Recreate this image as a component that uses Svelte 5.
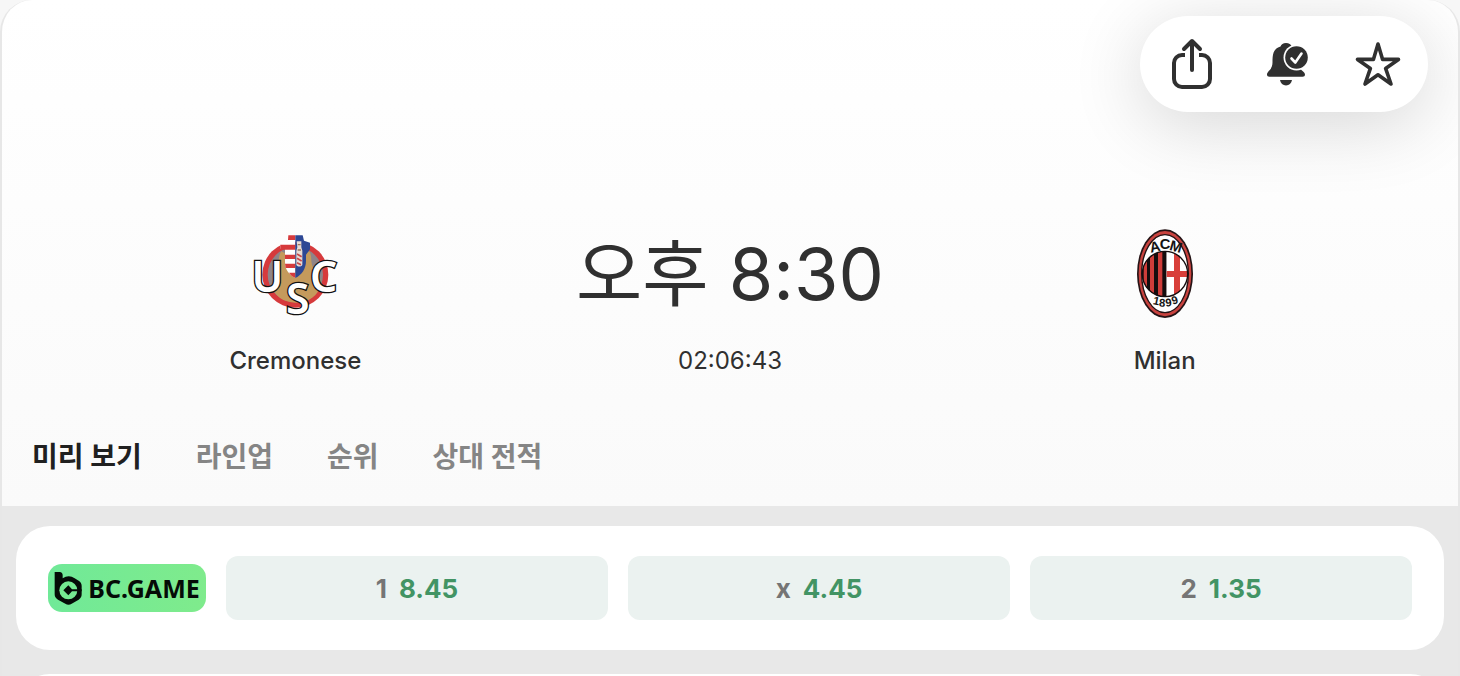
<script lang="ts">
	let activeTab = $state('preview');
	let favourite = $state(false);

	const tabs = [
		{ id: 'preview', label: '미리 보기' },
		{ id: 'lineup', label: '라인업' },
		{ id: 'standings', label: '순위' },
		{ id: 'h2h', label: '상대 전적' }
	];

	const odds = [
		{ pick: '1', value: '8.45' },
		{ pick: 'x', value: '4.45' },
		{ pick: '2', value: '1.35' }
	];
</script>

<main class="match">
	<header class="match-header">
		<div class="actions">
			<button type="button" class="action" aria-label="공유">
				<svg width="48" height="56" viewBox="0 0 48 56" fill="none" stroke="currentColor" stroke-width="4" stroke-linecap="round" stroke-linejoin="round">
					<path d="M17 19h-3a8 8 0 0 0-8 8v16a8 8 0 0 0 8 8h20a8 8 0 0 0 8-8V27a8 8 0 0 0-8-8h-3" stroke-linecap="butt" />
					<path d="M24 34V6M16 13l8-8 8 8" />
				</svg>
			</button>
			<button type="button" class="action" aria-label="알림">
				<svg width="48" height="56" viewBox="0 0 48 56" fill="currentColor">
					<path d="M25 7c3 0 5 1.400 5.800 3.400A13 13 0 0 0 39.500 33c1.800 2 4.500 3.500 4.500 5.600 0 1.400-1 2.200-2.400 2.200H8.400C7 40.800 6 40 6 38.600c0-4 5.500-4.500 5.500-12 0-8 .6-14.200 8-16.200C20.400 8.400 22 7 25 7Z" />
					<path d="M19 44h12c-.6 3.400-2.800 5.400-6 5.400s-5.400-2-6-5.400Z" />
					<circle cx="35.500" cy="21.500" r="13" fill="#fff" />
					<circle cx="35.500" cy="21.500" r="11.300" />
					<path d="m30.500 22.500 3.800 4 6.200-9" fill="none" stroke="#fff" stroke-width="2.600" stroke-linecap="round" stroke-linejoin="round" />
				</svg>
			</button>
			<button type="button" class="action" aria-label="즐겨찾기" aria-pressed={favourite} onclick={() => (favourite = !favourite)}>
				<svg width="48" height="56" viewBox="0 0 48 56" fill={favourite ? 'currentColor' : 'none'} stroke="currentColor" stroke-width="3.600" stroke-linejoin="round">
					<path d="m24 8 4.600 15.400H44.500L31.600 32.400 37 48 24 38.800 11 48l5.400-15.600L3.500 23.400h15.900L24 8Z" />
				</svg>
			</button>
		</div>

		<div class="scoreboard">
			<div class="team">
				<svg class="crest" width="88" height="90" viewBox="34 15 264 270" role="img" aria-label="Cremonese">
					<circle cx="167" cy="152" r="99" fill="#d63a3c" />
					<circle cx="167" cy="152" r="83" fill="#8f8488" />
					<path d="M125 82c18 14 66 14 84 0 8 12 4 26 8 40 6 26 30 34 28 58-10 36-38 56-76 56-40 0-62-20-76-52 14-16 24-34 24-60 0-18 0-30 8-42Z" fill="#c49a5c" />
					<path d="M146 34h21v128c-18-10-31-24-31-48V74h-14V55h22Z" fill="#fff" />
					<path d="M146 34h21v14h-22ZM122 62h45v15h-45ZM136 92h31v13h-31ZM136 119h31v13h-29ZM148 146h19v16c-8-4-14-8-19-16Z" fill="#d63a3c" />
					<path d="M167 34h22l4 16 18 6v20l-12 16v18c0 24-12 42-32 52Z" fill="#2d4794" />
					<path d="M171 52h14v18l3 10v43c-5 6-13 6-18 0V80l3-10Z" fill="#e9dcd3" />
					<path d="m172 90 14 8M172 103l14 8M172 116l12 6" stroke="#c8474a" stroke-width="5" />
					<path d="M174 62h9M174 78h10" stroke="#9b7462" stroke-width="4" />
					<g class="crest-letters" font-size="128" text-anchor="middle">
						<text x="83" y="204">U</text>
						<text x="174" y="270">S</text>
						<text x="252" y="204">C</text>
					</g>
				</svg>
				<span class="team-name">Cremonese</span>
			</div>

			<div class="kickoff">
				<time class="kickoff-time" datetime="20:30">오후 8:30</time>
				<span class="countdown">02:06:43</span>
			</div>

			<div class="team">
				<svg class="crest" width="56" height="90" viewBox="49 27 168 270" role="img" aria-label="Milan">
					<defs>
						<clipPath id="milan-field"><ellipse cx="133" cy="162" rx="68" ry="68" /></clipPath>
					</defs>
					<ellipse cx="133" cy="161" rx="84" ry="133" fill="#241315" />
					<ellipse cx="133" cy="161" rx="79" ry="128" fill="#c9433f" />
					<ellipse cx="133" cy="161" rx="70" ry="117" fill="#fff" stroke="#241315" stroke-width="4" />
					<g clip-path="url(#milan-field)">
						<path d="M60 90h78v145H60Z" fill="#150d0e" />
						<path d="M69 90h10v145H69ZM88 90h12v145H88ZM112 90h13v145h-13Z" fill="#cf3d3a" />
						<path d="M138 90h70v145h-70Z" fill="#fff" />
						<path d="M160 90h18v145h-18ZM138 153h70v18h-70Z" fill="#d83f3a" />
					</g>
					<ellipse cx="133" cy="162" rx="68" ry="68" fill="none" stroke="#150d0e" stroke-width="4" />
					<g class="milan-letters" font-size="44" text-anchor="middle">
						<text x="106" y="95" transform="rotate(-12 106 95)">A</text>
						<text x="133" y="87">C</text>
						<text x="162" y="94" transform="rotate(16 162 94)">M</text>
					</g>
					<g class="milan-letters" font-size="34" text-anchor="middle">
						<text x="105" y="254" transform="rotate(12 105 254)">1</text>
						<text x="124" y="260" transform="rotate(4 124 260)">8</text>
						<text x="145" y="259" transform="rotate(-6 145 259)">9</text>
						<text x="165" y="252" transform="rotate(-16 165 252)">9</text>
					</g>
				</svg>
				<span class="team-name">Milan</span>
			</div>
		</div>

		<nav class="tabs">
			{#each tabs as tab (tab.id)}
				<button type="button" class="tab" class:active={activeTab === tab.id} onclick={() => (activeTab = tab.id)}>
					{tab.label}
				</button>
			{/each}
		</nav>
	</header>

	<div class="content">
		<section class="odds-card">
			<a class="bookmaker" href="#bcgame">
				<svg width="28" height="34" viewBox="0 0 84 102" aria-hidden="true">
					<path d="M2 3h15c6 0 9 4 9 10v9c6-4 12-6 18-6 7 0 12 2 18 6l12 7c6 4 9 9 9 16v25c0 7-3 12-9 16L53 98c-6 4-13 4-19 0L12 86C5 82 2 77 2 70V3Z" fill="#050b07" />
					<circle cx="43" cy="58" r="27" fill="#75e991" />
					<path d="m43 43 11 12h29v6H54L43 73 28 58Z" fill="#050b07" />
				</svg>
				<span>BC.GAME</span>
			</a>
			{#each odds as odd (odd.pick)}
				<button type="button" class="odd">
					<span class="odd-pick">{odd.pick}</span>
					<span class="odd-value">{odd.value}</span>
				</button>
			{/each}
		</section>
		<section class="next-card"></section>
	</div>
</main>

<style>
	:global(body) {
		background: #f7f7f7;
	}

	.match {
		box-sizing: border-box;
		height: 100vh;
		overflow: hidden;
		border: 2px solid #e7e7e7;
		border-width: 0 2px;
		border-radius: 32px 32px 0 0;
		background: #e8e8e8;
		color: #303030;
		font-family: Inter, 'Noto Sans CJK KR', sans-serif;
	}

	button {
		border: 0;
		padding: 0;
		background: none;
		color: inherit;
		font: inherit;
		cursor: pointer;
	}

	.match-header {
		display: flex;
		flex-direction: column;
		padding-top: 16px;
		background: linear-gradient(#fff, #fafafa);
	}

	.actions {
		display: flex;
		align-self: flex-end;
		align-items: center;
		gap: 45px;
		height: 96px;
		margin-right: 30px;
		padding: 0 26px 0 28px;
		border-radius: 48px;
		background: #fff;
		box-shadow: 0 12px 72px rgb(0 0 0 / 16%);
	}

	.action {
		display: flex;
	}

	.scoreboard {
		display: grid;
		grid-template-columns: repeat(3, 1fr);
		margin-top: 117px;
		padding: 0 76px;
	}

	.team,
	.kickoff {
		display: flex;
		flex-direction: column;
		align-items: center;
		gap: 25px;
	}

	.crest {
		overflow: visible;
	}

	.crest-letters {
		fill: #fff;
		stroke: #111;
		stroke-width: 8px;
		paint-order: stroke;
		font-family: 'Noto Sans', sans-serif;
		font-weight: 600;
	}

	.milan-letters {
		fill: #151515;
		font-family: 'Liberation Sans', sans-serif;
		font-weight: 700;
	}

	.team-name,
	.countdown {
		font-size: 24px;
		font-weight: 500;
		line-height: 34px;
	}

	.kickoff-time {
		font-size: 72px;
		font-weight: 400;
		line-height: 90px;
		white-space: nowrap;
	}

	.countdown {
		font-weight: 400;
	}

	.tabs {
		display: flex;
		gap: 54px;
		padding: 59px 30px 29px;
	}

	.tab {
		color: #858585;
		font-size: 28px;
		font-weight: 700;
		line-height: 40px;
		white-space: nowrap;
	}

	.tab.active {
		color: #202020;
	}

	.content {
		display: flex;
		flex-direction: column;
		gap: 24px;
		padding: 20px 14px 0;
	}

	.odds-card {
		display: flex;
		align-items: center;
		gap: 20px;
		padding: 30px 32px;
		border-radius: 34px;
		background: #fff;
	}

	.bookmaker {
		box-sizing: border-box;
		display: flex;
		flex: 0 0 158px;
		align-items: center;
		justify-content: center;
		gap: 6px;
		height: 48px;
		border-radius: 14px;
		background: linear-gradient(90deg, #70e998, #7feb8c);
		color: #050b07;
		font-family: 'Noto Sans', sans-serif;
		font-size: 25px;
		font-weight: 700;
		text-decoration: none;
	}

	.odd {
		display: flex;
		flex: 1;
		align-items: center;
		justify-content: center;
		gap: 12px;
		height: 64px;
		border-radius: 12px;
		background: #ebf2f0;
		font-size: 26px;
		font-weight: 700;
	}

	.odd-pick {
		color: #757575;
	}

	.odd-value {
		color: #429464;
	}

	.next-card {
		height: 120px;
		border-radius: 34px;
		background: #fff;
	}
</style>
